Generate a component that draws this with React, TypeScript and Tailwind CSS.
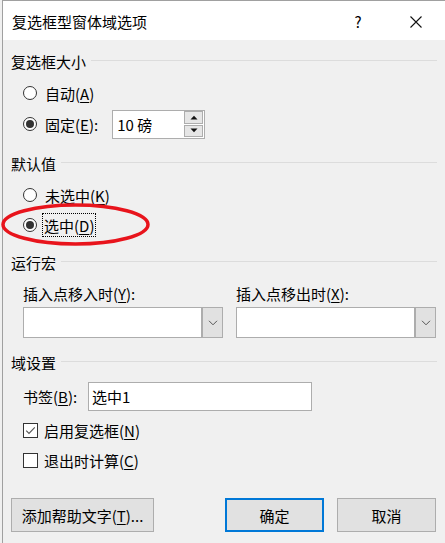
import React from "react";

const FONT = { fontFamily: '"Microsoft YaHei UI","Noto Sans CJK SC","Noto Sans",sans-serif' };

function U({ children }: { children: React.ReactNode }) {
  return <span className="underline underline-offset-[2px] decoration-[1px]">{children}</span>;
}

function Radio({ checked }: { checked?: boolean }) {
  return (
    <span className="w-[14px] h-[14px] min-w-[14px] rounded-full border border-[#333333] bg-white flex items-center justify-center shrink-0">
      {checked && <span className="w-[8px] h-[8px] rounded-full bg-[#333333]" />}
    </span>
  );
}

function Check({ checked }: { checked?: boolean }) {
  return (
    <span className="w-[15px] h-[15px] min-w-[15px] border border-[#333333] bg-white flex items-center justify-center shrink-0">
      {checked && (
        <svg width="13" height="13" viewBox="0 0 13 13">
          <path d="M2.2 6.6 L5 9.4 L10.8 3.4" fill="none" stroke="#555" strokeWidth="1.1" />
        </svg>
      )}
    </span>
  );
}

function GroupHeader({ label }: { label: string }) {
  return (
    <div className="h-[22px] flex items-center px-[8px]">
      <span className="leading-none">{label}</span>
      <span className="flex-1 h-px bg-[#dcdcdc] ml-[5px] mt-[-1px]" />
    </div>
  );
}

function Dropdown() {
  return (
    <div className="w-[200px] h-[31px] border border-[#adadad] bg-white flex">
      <div className="flex-1" />
      <div className="w-[21px] h-full bg-[#e1e1e1] border-l-2 border-[#adadad] flex items-center justify-center">
        <svg width="10" height="6" viewBox="0 0 10 6">
          <path d="M1 0.8 L5 4.8 L9 0.8" fill="none" stroke="#555" strokeWidth="1" />
        </svg>
      </div>
    </div>
  );
}

export default function App() {
  return (
    <div className="relative w-[445px] h-[543px] bg-[#f0f0f0] text-[15px] text-black overflow-hidden" style={FONT}>
      <div className="ml-[2px] h-full border-l border-t border-[#a0a0a0] flex flex-col">
        {/* title bar */}
        <div className="h-[39px] bg-white flex items-center pl-[9px] shrink-0">
          <span className="leading-none mt-[2px]">复选框型窗体域选项</span>
          <span className="flex-1" />
          <span className="leading-none mt-[2px] w-[12px] text-center mr-[45px]">?</span>
          <svg width="14" height="14" viewBox="0 0 14 14" className="mr-[22px] mt-[2px]">
            <path d="M1.5 1.5 L12.5 12.5 M12.5 1.5 L1.5 12.5" stroke="#111" strokeWidth="1.1" />
          </svg>
        </div>

        <div className="h-[10px]" />
        <GroupHeader label="复选框大小" />
        <div className="h-[6px]" />
        <div className="h-[30px] flex items-center pl-[20px] gap-[8px]">
          <Radio />
          <span className="leading-none">自动(<U>A</U>)</span>
        </div>
        <div className="h-[32px] flex items-center pl-[20px]">
          <Radio checked />
          <span className="leading-none ml-[8px]">固定(<U>E</U>):</span>
          <div className="ml-[14px] w-[93px] h-[29px] border border-[#adadad] bg-white flex items-center">
            <span className="flex-1 pl-[4px] leading-none">10 磅</span>
            <div className="w-[19px] h-[26px] flex flex-col gap-[1px] mr-[1px]">
              <div className="flex-1 bg-[#e6e6e6] border border-[#adadad] flex items-center justify-center">
                <svg width="8" height="5" viewBox="0 0 8 5"><path d="M0.5 4.5 L4 0.8 L7.5 4.5 Z" fill="#111" /></svg>
              </div>
              <div className="flex-1 bg-[#e6e6e6] border border-[#adadad] flex items-center justify-center">
                <svg width="8" height="5" viewBox="0 0 8 5"><path d="M0.5 0.5 L4 4.2 L7.5 0.5 Z" fill="#111" /></svg>
              </div>
            </div>
          </div>
        </div>

        <div className="h-[12px]" />
        <GroupHeader label="默认值" />
        <div className="h-[6px]" />
        <div className="h-[30px] flex items-center pl-[20px] gap-[8px]">
          <Radio />
          <span className="leading-none">未选中(<U>K</U>)</span>
        </div>
        <div className="h-[30px] flex items-center pl-[20px] gap-[5px]">
          <Radio checked />
          <span className="h-[24px] border border-dotted border-black px-[1px] flex items-center leading-none">
            选中(<U>D</U>)
          </span>
        </div>

        <div className="h-[11px]" />
        <GroupHeader label="运行宏" />
        <div className="h-[9px]" />
        <div className="h-[22px] flex items-center pl-[20px] gap-[13px] leading-none">
          <span className="w-[200px]">插入点移入时(<U>Y</U>):</span>
          <span className="w-[200px]">插入点移出时(<U>X</U>):</span>
        </div>
        <div className="h-[3px]" />
        <div className="flex pl-[20px] gap-[13px]">
          <Dropdown />
          <Dropdown />
        </div>

        <div className="h-[13px]" />
        <GroupHeader label="域设置" />
        <div className="h-[9px]" />
        <div className="h-[29px] flex items-center pl-[20px]">
          <span className="leading-none w-[65px]">书签(<U>B</U>):</span>
          <div className="w-[224px] h-[29px] border border-[#adadad] bg-white flex items-center pl-[3px] leading-none">
            选中1
          </div>
        </div>
        <div className="h-[4px]" />
        <div className="h-[30px] flex items-center pl-[20px] gap-[6px]">
          <Check checked />
          <span className="leading-none">启用复选框(<U>N</U>)</span>
        </div>
        <div className="h-[30px] flex items-center pl-[20px] gap-[6px]">
          <Check />
          <span className="leading-none">退出时计算(<U>C</U>)</span>
        </div>

        <div className="h-[23px]" />
        <div className="flex px-[8px] items-center">
          <button className="w-[143px] h-[34px] bg-[#e1e1e1] border border-[#adadad] leading-none" style={FONT}>
            添加帮助文字(<U>T</U>)...
          </button>
          <span className="flex-1" />
          <button className="w-[99px] h-[34px] bg-[#e1e1e1] border-2 border-[#0078d7] leading-none" style={FONT}>
            确定
          </button>
          <button className="ml-[13px] mr-[1px] w-[99px] h-[34px] bg-[#e1e1e1] border border-[#adadad] leading-none" style={FONT}>
            取消
          </button>
        </div>
      </div>

      {/* red annotation ellipse */}
      <svg className="absolute left-0 top-[199px] pointer-events-none" width="156" height="52" viewBox="0 0 156 52">
        <ellipse cx="75.5" cy="25.5" rx="72.5" ry="19.5" fill="none" stroke="#e8141c" strokeWidth="3.5" />
      </svg>
    </div>
  );
}
